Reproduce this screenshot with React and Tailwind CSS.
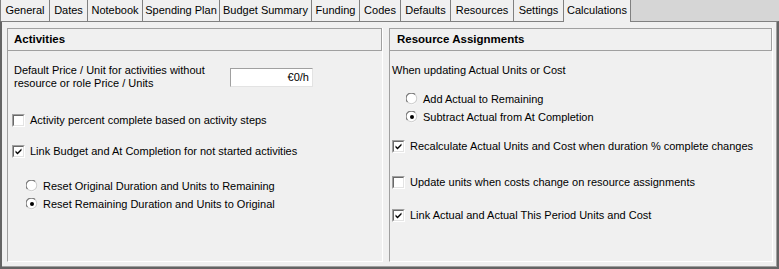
import React from 'react';

// ─── Tabs ─────────────────────────────────────────────────────────────────────

const TABS = [
  { label: 'General', w: 'w-[49px]' },
  { label: 'Dates', w: 'w-[38px]' },
  { label: 'Notebook', w: 'w-[55px]' },
  { label: 'Spending Plan', w: 'w-[77px]' },
  { label: 'Budget Summary', w: 'w-[92px]' },
  { label: 'Funding', w: 'w-[48px]' },
  { label: 'Codes', w: 'w-[41px]' },
  { label: 'Defaults', w: 'w-[50px]' },
  { label: 'Resources', w: 'w-[63px]' },
  { label: 'Settings', w: 'w-[50px]' },
  { label: 'Calculations', w: 'w-[68px]', active: true },
];

function Tab({ label, w, active }) {
  if (active) {
    return (
      <div className={`${w} relative z-10 -mb-px h-[22px] border-x border-[#808080] bg-[#f0f0f0] pb-[1px] flex items-center justify-center`}>
        {label}
      </div>
    );
  }
  return (
    <div className={`${w} h-[21px] border-l border-[#808080] bg-[#f0f0f0] flex items-center justify-center`}>
      {label}
    </div>
  );
}

// ─── Controls ─────────────────────────────────────────────────────────────────

function Checkbox({ checked }) {
  return (
    <div className="w-[13px] h-[13px] shrink-0 border border-t-[#a0a0a0] border-l-[#a0a0a0] border-b-white border-r-white">
      <div className="w-full h-full bg-white border border-t-[#696969] border-l-[#696969] border-b-[#e3e3e3] border-r-[#e3e3e3]">
        {checked && (
          <svg width="9" height="9" viewBox="0 0 9 9">
            <path d="M1.5 3.5 L3.5 5.5 L7.5 1.5 L7.5 3.5 L3.5 7.5 L1.5 5.5 Z" fill="#000" />
          </svg>
        )}
      </div>
    </div>
  );
}

function Radio({ checked }) {
  return (
    <svg width="12" height="12" viewBox="0 0 12 12" className="shrink-0">
      <circle cx="6" cy="6" r="5.5" fill="#fff" />
      <path d="M1.6 9.2 A5.3 5.3 0 0 1 9.2 1.6" stroke="#7a7a7a" strokeWidth="1.2" fill="none" />
      <path d="M9.2 1.6 A5.3 5.3 0 0 1 1.6 9.2" stroke="#d0d0d0" strokeWidth="1.2" fill="none" />
      {checked && <circle cx="6" cy="6" r="2" fill="#000" />}
    </svg>
  );
}

function CheckRow({ checked, label, className = '' }) {
  return (
    <div className={`h-[16px] flex items-center ${className}`}>
      <Checkbox checked={checked} />
      <span className="ml-[5px] whitespace-nowrap">{label}</span>
    </div>
  );
}

function RadioRow({ checked, label, className = '' }) {
  return (
    <div className={`h-[16px] flex items-center ${className}`}>
      <Radio checked={checked} />
      <span className="ml-[5px] whitespace-nowrap">{label}</span>
    </div>
  );
}

function Panel({ title, width, titlePad, children }) {
  return (
    <div className={`${width} flex flex-col border-l border-r border-b border-l-[#a0a0a0] border-r-white border-b-white`}>
      <div className={`h-[23px] shrink-0 border-t border-r border-b border-[#a0a0a0] flex items-center ${titlePad} font-bold text-[11.5px]`}>
        {title}
      </div>
      <div className="flex-1">{children}</div>
    </div>
  );
}

// ─── App ──────────────────────────────────────────────────────────────────────

export default function App() {
  return (
    <div
      className="w-[779px] h-[269px] bg-[#d6d6d6] text-[11px] text-black flex flex-col overflow-hidden"
      style={{ fontFamily: '"Liberation Sans", Arial, sans-serif' }}
    >
      <div className="h-[21px] flex items-start shrink-0">
        {TABS.map(t => <Tab key={t.label} {...t} />)}
      </div>

      <div className="flex-1 bg-[#f0f0f0] border-t border-[#808080] border-l-2 border-l-[#646464] border-r-2 border-r-[#646464] border-b-2 border-b-[#646464]">
        <div className="h-full border-r border-b border-[#a0a0a0] pl-[5px] pr-[3px] pt-[6px] pb-[4px] flex gap-[6px]">

          <Panel title="Activities" width="w-[376px]" titlePad="pl-[6px]">
            <div className="pl-[6px]">
              <div className="mt-[13px] flex items-center">
                <div className="w-[216px] leading-[13px]">
                  Default Price / Unit for activities without<br />resource or role Price / Units
                </div>
                <div className="w-[83px] h-[19px] bg-white border border-t-[#a0a0a0] border-l-[#a0a0a0] border-b-[#e3e3e3] border-r-[#e3e3e3] flex items-center justify-end pr-[3px]">
                  €0/h
                </div>
              </div>
            </div>
            <div className="pl-[4px]">
              <CheckRow className="mt-[22px]" label="Activity percent complete based on activity steps" />
              <CheckRow className="mt-[15px]" checked label="Link Budget and At Completion for not started activities" />
            </div>
            <div className="pl-[18px]">
              <RadioRow className="mt-[19px]" label="Reset Original Duration and Units to Remaining" />
              <RadioRow className="mt-[2px]" checked label="Reset Remaining Duration and Units to Original" />
            </div>
          </Panel>

          <Panel title="Resource Assignments" width="w-[384px]" titlePad="pl-[7px]">
            <div className="pl-[2px]">
              <div className="mt-[11px] h-[16px] flex items-center">When updating Actual Units or Cost</div>
            </div>
            <div className="pl-[16px]">
              <RadioRow className="mt-[13px]" label="Add Actual to Remaining" />
              <RadioRow className="mt-[2px]" checked label="Subtract Actual from At Completion" />
            </div>
            <div className="pl-[2px]">
              <CheckRow className="mt-[13px]" checked label="Recalculate Actual Units and Cost when duration % complete changes" />
              <CheckRow className="mt-[20px]" label="Update units when costs change on resource assignments" />
              <CheckRow className="mt-[17px]" checked label="Link Actual and Actual This Period Units and Cost" />
            </div>
          </Panel>

        </div>
      </div>
    </div>
  );
}
